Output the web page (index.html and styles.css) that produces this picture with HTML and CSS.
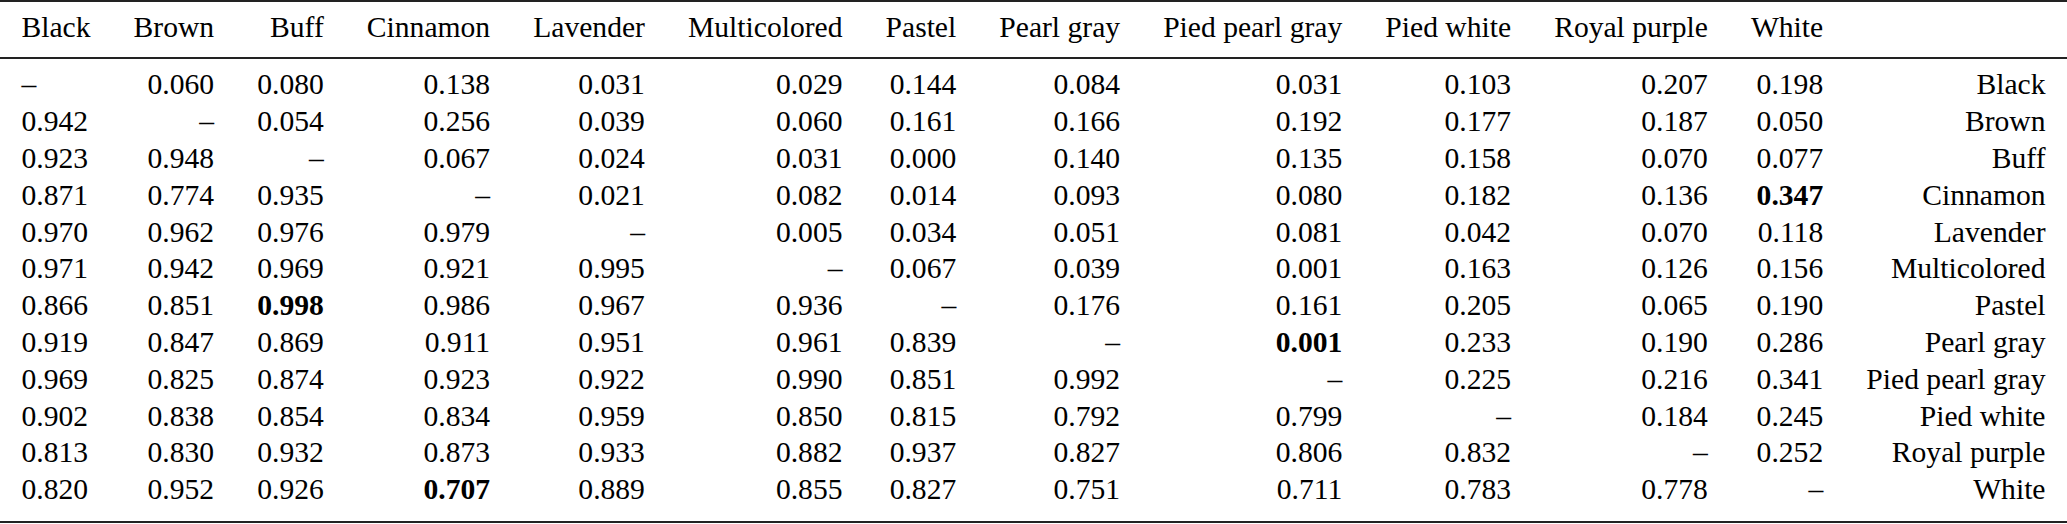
FILE: index.html
```html
<!DOCTYPE html>
<html lang="en">
<head>
<meta charset="utf-8">
<title>Similarity matrix</title>
<link rel="stylesheet" href="styles.css">
</head>
<body>
<table class="matrix">
  <thead>
    <tr>
      <th class="left">Black</th><th>Brown</th><th>Buff</th><th>Cinnamon</th><th>Lavender</th><th>Multicolored</th><th>Pastel</th><th>Pearl gray</th><th>Pied pearl gray</th><th>Pied white</th><th>Royal purple</th><th>White</th><th></th>
    </tr>
  </thead>
  <tbody>
    <tr><td class="left">–</td><td>0.060</td><td>0.080</td><td>0.138</td><td>0.031</td><td>0.029</td><td>0.144</td><td>0.084</td><td>0.031</td><td>0.103</td><td>0.207</td><td>0.198</td><td>Black</td></tr>
    <tr><td class="left">0.942</td><td>–</td><td>0.054</td><td>0.256</td><td>0.039</td><td>0.060</td><td>0.161</td><td>0.166</td><td>0.192</td><td>0.177</td><td>0.187</td><td>0.050</td><td>Brown</td></tr>
    <tr><td class="left">0.923</td><td>0.948</td><td>–</td><td>0.067</td><td>0.024</td><td>0.031</td><td>0.000</td><td>0.140</td><td>0.135</td><td>0.158</td><td>0.070</td><td>0.077</td><td>Buff</td></tr>
    <tr><td class="left">0.871</td><td>0.774</td><td>0.935</td><td>–</td><td>0.021</td><td>0.082</td><td>0.014</td><td>0.093</td><td>0.080</td><td>0.182</td><td>0.136</td><td class="best">0.347</td><td>Cinnamon</td></tr>
    <tr><td class="left">0.970</td><td>0.962</td><td>0.976</td><td>0.979</td><td>–</td><td>0.005</td><td>0.034</td><td>0.051</td><td>0.081</td><td>0.042</td><td>0.070</td><td>0.118</td><td>Lavender</td></tr>
    <tr><td class="left">0.971</td><td>0.942</td><td>0.969</td><td>0.921</td><td>0.995</td><td>–</td><td>0.067</td><td>0.039</td><td>0.001</td><td>0.163</td><td>0.126</td><td>0.156</td><td>Multicolored</td></tr>
    <tr><td class="left">0.866</td><td>0.851</td><td class="best">0.998</td><td>0.986</td><td>0.967</td><td>0.936</td><td>–</td><td>0.176</td><td>0.161</td><td>0.205</td><td>0.065</td><td>0.190</td><td>Pastel</td></tr>
    <tr><td class="left">0.919</td><td>0.847</td><td>0.869</td><td>0.911</td><td>0.951</td><td>0.961</td><td>0.839</td><td>–</td><td class="best">0.001</td><td>0.233</td><td>0.190</td><td>0.286</td><td>Pearl gray</td></tr>
    <tr><td class="left">0.969</td><td>0.825</td><td>0.874</td><td>0.923</td><td>0.922</td><td>0.990</td><td>0.851</td><td>0.992</td><td>–</td><td>0.225</td><td>0.216</td><td>0.341</td><td>Pied pearl gray</td></tr>
    <tr><td class="left">0.902</td><td>0.838</td><td>0.854</td><td>0.834</td><td>0.959</td><td>0.850</td><td>0.815</td><td>0.792</td><td>0.799</td><td>–</td><td>0.184</td><td>0.245</td><td>Pied white</td></tr>
    <tr><td class="left">0.813</td><td>0.830</td><td>0.932</td><td>0.873</td><td>0.933</td><td>0.882</td><td>0.937</td><td>0.827</td><td>0.806</td><td>0.832</td><td>–</td><td>0.252</td><td>Royal purple</td></tr>
    <tr><td class="left">0.820</td><td>0.952</td><td>0.926</td><td class="best">0.707</td><td>0.889</td><td>0.855</td><td>0.827</td><td>0.751</td><td>0.711</td><td>0.783</td><td>0.778</td><td>–</td><td>White</td></tr>
  </tbody>
</table>
</body>
</html>
```

FILE: styles.css
```css
html, body {
  margin: 0;
  padding: 0;
  background: #ffffff;
}

.matrix {
  width: 100%;
  border-collapse: separate;
  border-spacing: 0;
  font-family: "Liberation Serif", "Times New Roman", serif;
  font-size: 29.6px;
  line-height: 36.8px;
  color: #000;
}

.matrix th,
.matrix td {
  padding: 0 21.5px;
  text-align: right;
  font-weight: normal;
  white-space: nowrap;
}

.matrix th.left,
.matrix td.left {
  text-align: left;
}

.matrix thead th {
  border-top: 2px solid #222;
  border-bottom: 2px solid #222;
  padding-top: 6.6px;
  padding-bottom: 11.4px;
}

.matrix tbody tr:first-child td {
  padding-top: 7.6px;
}

.matrix tbody tr:last-child td {
  padding-bottom: 12.6px;
  border-bottom: 2px solid #222;
}

.matrix td.best {
  font-weight: bold;
}
```
